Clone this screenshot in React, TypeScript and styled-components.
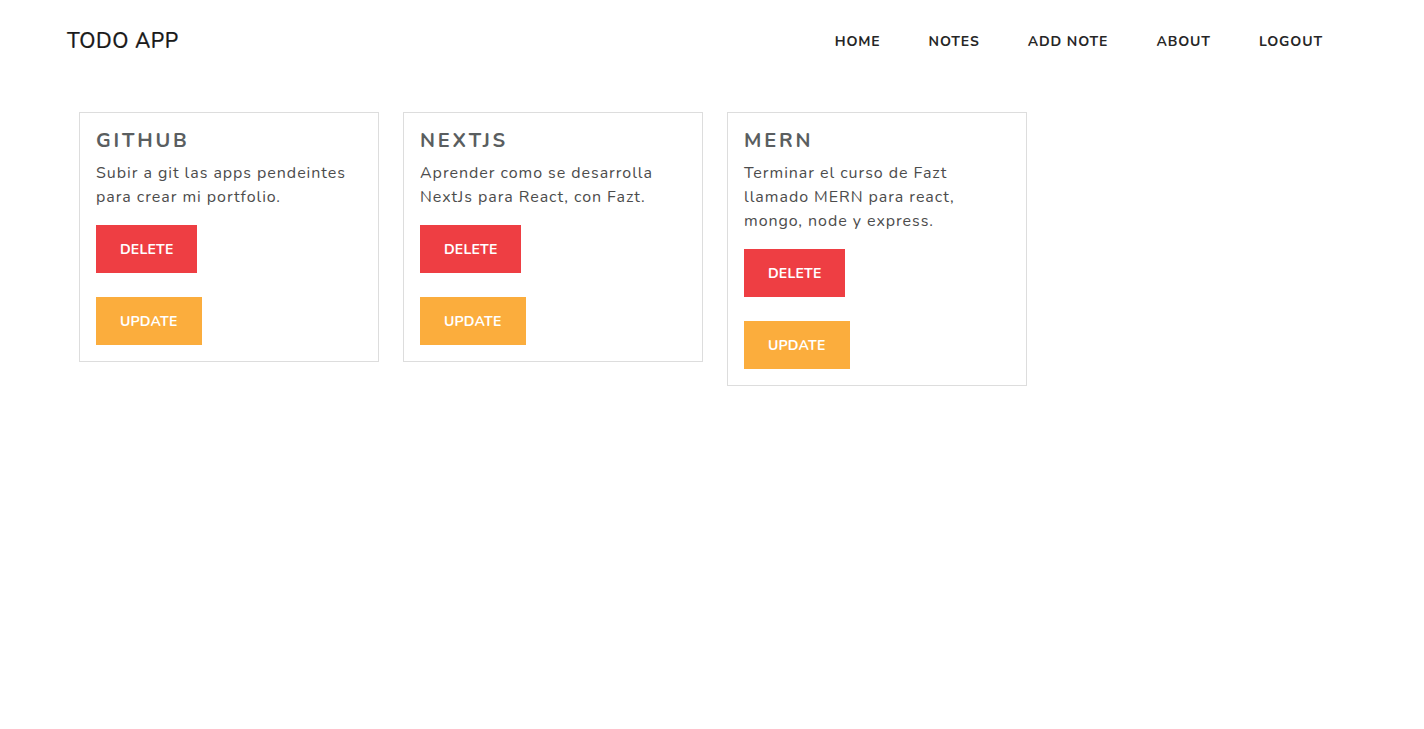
import React from "react";
import styled, { createGlobalStyle } from "styled-components";

const GlobalStyle = createGlobalStyle`
  html, body { margin: 0; padding: 0; background: #fff; }
  body { font-family: "Nunito", "Lato", "Noto Sans", sans-serif; }
  * { box-sizing: border-box; }
`;

const Nav = styled.nav`
  height: 82px;
  display: flex;
  align-items: center;
  justify-content: space-between;
  padding: 0 77px 0 67px;
`;

const Brand = styled.div`
  font-size: 21px;
  font-weight: 500;
  letter-spacing: 0.5px;
  color: #1a1a1a;
  -webkit-text-stroke: 0.2px #1a1a1a;
`;

const Links = styled.ul`
  display: flex;
  list-style: none;
  margin: 0;
  padding: 0;
`;

const LinkItem = styled.li`
  font-size: 14px;
  font-weight: 700;
  letter-spacing: 0.9px;
  color: #262626;
  padding: 0 24px;
`;

const Main = styled.main`
  display: flex;
  align-items: flex-start;
  gap: 24px;
  padding: 30px 79px;
`;

const Card = styled.div`
  width: 300px;
  border: 1px solid #dddddd;
  padding: 16px;
  display: flex;
  flex-direction: column;
  align-items: flex-start;
`;

const Title = styled.h2`
  margin: 1px 0 9px;
  font-size: 20px;
  line-height: 22px;
  font-weight: 700;
  letter-spacing: 2.8px;
  color: #5a5e60;
`;

const Text = styled.p`
  margin: 0 0 16px;
  font-size: 16px;
  line-height: 24px;
  letter-spacing: 0.95px;
  color: #4c4c4c;
`;

const Button = styled.button<{ $color: string }>`
  height: 48px;
  padding: 0 24px;
  border: none;
  background: ${(p) => p.$color};
  color: #fff;
  font-family: inherit;
  font-size: 14px;
  font-weight: 700;
  letter-spacing: 0.2px;
  margin-bottom: 24px;
  &:last-child { margin-bottom: 0; }
`;

const notes = [
  { title: "GITHUB", text: "Subir a git las apps pendeintes para crear mi portfolio." },
  { title: "NEXTJS", text: "Aprender como se desarrolla NextJs para React, con Fazt." },
  { title: "MERN", text: "Terminar el curso de Fazt llamado MERN para react, mongo, node y express." },
];

export default function App() {
  return (
    <>
      <GlobalStyle />
      <Nav>
        <Brand>TODO APP</Brand>
        <Links>
          {["HOME", "NOTES", "ADD NOTE", "ABOUT", "LOGOUT"].map((l) => (
            <LinkItem key={l}>{l}</LinkItem>
          ))}
        </Links>
      </Nav>
      <Main>
        {notes.map((n) => (
          <Card key={n.title}>
            <Title>{n.title}</Title>
            <Text>{n.text}</Text>
            <Button $color="#ee3e43">DELETE</Button>
            <Button $color="#fbad3d">UPDATE</Button>
          </Card>
        ))}
      </Main>
    </>
  );
}
